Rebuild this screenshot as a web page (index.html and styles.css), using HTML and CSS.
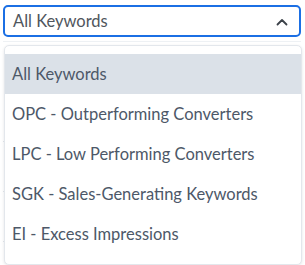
FILE: index.html
```html
<!DOCTYPE html>
<html>
<head>
<meta charset="utf-8">
<link rel="stylesheet" href="styles.css">
</head>
<body>
<div class="wrap">
  <div class="select">
    <span class="value">All Keywords</span>
    <svg class="chev" width="12" height="8" viewBox="0 0 12 8"><path d="M1.5 6.5 L6 2 L10.5 6.5" fill="none" stroke="#3c4249" stroke-width="1.8" stroke-linecap="round" stroke-linejoin="round"/></svg>
  </div>
  <div class="backdrop">
    <div class="row r1"></div>
    <div class="row r2"></div>
    <div class="row r3"></div>
    <div class="row r4"></div>
  </div>
  <ul class="menu">
    <li class="item active">All Keywords</li>
    <li class="item">OPC - Outperforming Converters</li>
    <li class="item">LPC - Low Performing Converters</li>
    <li class="item">SGK - Sales-Generating Keywords</li>
    <li class="item">EI - Excess Impressions</li>
  </ul>
</div>
</body>
</html>
```

FILE: styles.css
```css
* { box-sizing: border-box; }
html, body { margin: 0; padding: 0; background: #fff; }
body { font-family: "Lato", "Open Sans", sans-serif; width: 305px; height: 265px; overflow: hidden; }
.wrap { position: relative; padding: 5px 4px 0 3px; }
.select {
  height: 32px;
  border: 2px solid #1b6fe4;
  border-radius: 5px;
  display: flex;
  align-items: center;
  justify-content: space-between;
  padding: 0 11px 0 8px;
  color: #50565d;
  font-size: 16.5px;
}
.chev { margin-top: 1px; }
.backdrop { padding-top: 4px; }
.row { border-top: 1px solid #e3e7ec; height: 50px; }
.r1 { height: 100px; border-top-color: #eef1f4; }
.r4 { height: 18px; }
.menu {
  position: absolute;
  top: 45px;
  left: 4px;
  width: 298px;
  margin: 0;
  padding: 8px 0 10px;
  list-style: none;
  background: #fff;
  border: 1px solid #e3e7ec;
  border-radius: 5px;
  box-shadow: 0 1px 3px rgba(30, 40, 60, 0.12);
}
.item {
  height: 40px;
  display: flex;
  align-items: center;
  padding: 0 0 1px 7px;
  font-size: 16.5px;
  color: #4d5868;
}
.item.active { background: #dbe1e8; }
```
